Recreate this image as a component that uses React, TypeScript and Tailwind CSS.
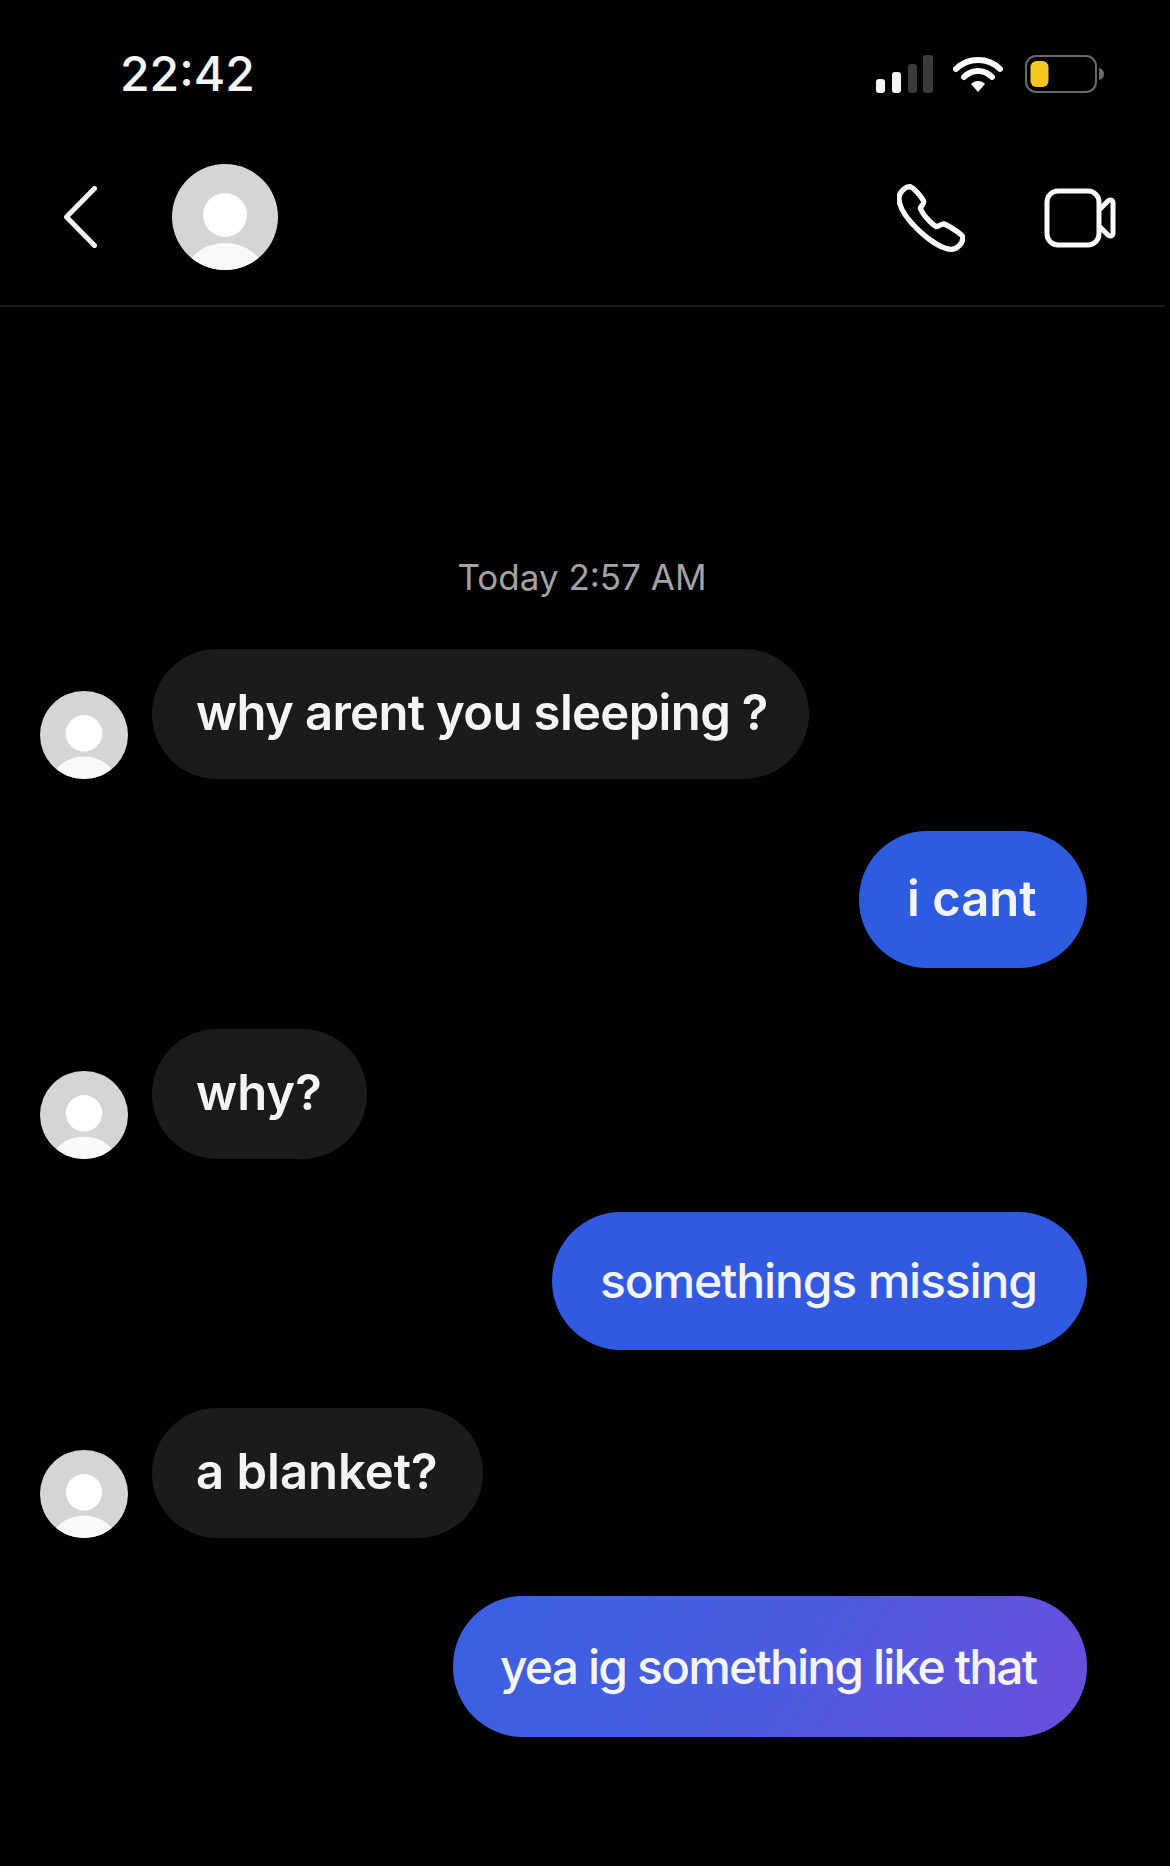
import React from "react";

function Avatar({ size }: { size: string }) {
  return (
    <svg viewBox="0 0 106 106" className={size}>
      <defs>
        <clipPath id="avatar-clip">
          <circle cx="53" cy="53" r="53" />
        </clipPath>
      </defs>
      <circle cx="53" cy="53" r="53" fill="#d5d5d5" />
      <g clipPath="url(#avatar-clip)">
        <circle cx="53" cy="51" r="22" fill="#ffffff" />
        <ellipse cx="53" cy="108" rx="38" ry="29" fill="#fafafa" />
      </g>
    </svg>
  );
}

function Signal() {
  return (
    <svg width="58" height="38" viewBox="0 0 58 38">
      <rect x="0" y="24" width="9" height="14" rx="3" fill="#f4f4f4" />
      <rect x="16" y="17" width="9" height="21" rx="3" fill="#f4f4f4" />
      <rect x="32" y="9" width="9" height="29" rx="3" fill="#3b3b3b" />
      <rect x="47" y="0" width="10" height="38" rx="3" fill="#3b3b3b" />
    </svg>
  );
}

function Wifi() {
  return (
    <svg width="50" height="38" viewBox="0 0 50 38" fill="none">
      <path d="M3 14 C15 2 35 2 47 14" stroke="#ffffff" strokeWidth="6" strokeLinecap="round" />
      <path d="M11 22 C19 14 31 14 39 22" stroke="#ffffff" strokeWidth="6" strokeLinecap="round" />
      <path d="M18 29 L25 37 L32 29 C28 25 22 25 18 29 Z" fill="#ffffff" />
    </svg>
  );
}

function Battery() {
  return (
    <svg width="79" height="38" viewBox="0 0 79 38" fill="none">
      <rect x="1" y="1" width="70" height="36" rx="10" stroke="#6a6a6a" strokeWidth="2" />
      <rect x="5.500" y="6" width="18" height="26" rx="6" fill="#f5c71f" />
      <path d="M74 13 C78 14 79 17 79 19 C79 21 78 24 74 25 Z" fill="#6a6a6a" />
    </svg>
  );
}

function Chevron() {
  return (
    <svg width="33" height="62" viewBox="0 0 33 62" fill="none">
      <path d="M30.500 2.500 L2.500 31 L30.500 59.500" stroke="#f5f5f5" strokeWidth="5" strokeLinecap="round" strokeLinejoin="round" />
    </svg>
  );
}

function Phone() {
  return (
    <svg width="68" height="68" viewBox="0 0 204 204" fill="none">
      <path
        d="M40 8 C52 12 76 42 80 52 C82 60 72 66 70 72 C76 90 102 120 118 128 C126 128 134 118 142 120 C156 126 196 150 198 160 C198 178 180 196 162 196 C110 192 10 100 6 46 C4 28 22 8 40 8 Z"
        stroke="#fafafa"
        strokeWidth="16"
        strokeLinejoin="round"
      />
    </svg>
  );
}

function Video() {
  return (
    <svg width="72" height="60" viewBox="0 0 72 60" fill="none">
      <rect x="3" y="3" width="52" height="54" rx="11" stroke="#fafafa" strokeWidth="5" />
      <path
        d="M55 22 L64 13 C66 11 69 12 69 15 L69 45 C69 48 66 49 64 47 L55 38"
        stroke="#fafafa"
        strokeWidth="5"
        strokeLinejoin="round"
      />
    </svg>
  );
}

function Incoming({ text, cls, mt }: { text: string; cls: string; mt: string }) {
  return (
    <div className={`flex items-end pl-[40px] ${mt}`}>
      <Avatar size="w-[88px] h-[88px] shrink-0" />
      <div className={`ml-[24px] flex h-[130px] items-center rounded-[65px] bg-[#1b1b1b] pb-[2px] pl-[44px] font-semibold text-[#f4f4f4] ${cls}`}>
        {text}
      </div>
    </div>
  );
}

export default function App() {
  return (
    <div className="h-[1866px] w-[1170px] overflow-hidden bg-black font-['Inter',sans-serif]">
      <div className="flex h-[148px] items-center justify-between pl-[120px] pr-[66px]">
        <span className="text-[48px] font-medium leading-none text-[#f5f5f5]">22:42</span>
        <div className="flex items-center">
          <Signal />
          <div className="ml-[19px]">
            <Wifi />
          </div>
          <div className="ml-[22px]">
            <Battery />
          </div>
        </div>
      </div>
      <div className="flex h-[138px] items-center pl-[64px] pr-[54px]">
        <Chevron />
        <Avatar size="ml-[75px] w-[106px] h-[106px]" />
        <div className="ml-auto flex items-center gap-[79px] pt-[2px]">
          <Phone />
          <Video />
        </div>
      </div>
      <div className="mt-[19px] mr-[5px] h-[2px] bg-[#1a1a1a]" />
      <div className="mt-[250px] pr-[6px] text-center text-[35px] leading-[40px] text-[#a3a3a3]">Today 2:57 AM</div>
      <div className="mt-[52px] flex flex-col">
        <Incoming text="why arent you sleeping ?" cls="w-[657px] text-[49px] tracking-[-0.65px]" mt="" />
        <div className="mt-[52px] flex justify-end pr-[83px]">
          <div className="flex h-[137px] w-[228px] items-center rounded-[68px] bg-[#2e5ce0] pb-[2px] pl-[48px] text-[49px] font-semibold text-[#f4f4f4]">
            i cant
          </div>
        </div>
        <Incoming text="why?" cls="w-[215px] text-[49px]" mt="mt-[61px]" />
        <div className="mt-[53px] flex justify-end pr-[83px]">
          <div className="flex h-[138px] w-[535px] items-center rounded-[69px] bg-[#325ae0] pl-[48px] text-[48px] font-medium tracking-[-1.15px] text-[#f4f4f4]">
            somethings missing
          </div>
        </div>
        <Incoming text="a blanket?" cls="w-[331px] text-[49px]" mt="mt-[58px]" />
        <div className="mt-[58px] flex justify-end pr-[83px]">
          <div className="flex h-[141px] w-[634px] items-center rounded-[70px] bg-linear-120 from-[#3761e0] via-[#4a5ce0] to-[#6a4edc] pl-[47px] text-[48px] font-medium tracking-[-1.85px] text-[#f4f4f4]">
            yea ig something like that
          </div>
        </div>
      </div>
    </div>
  );
}
